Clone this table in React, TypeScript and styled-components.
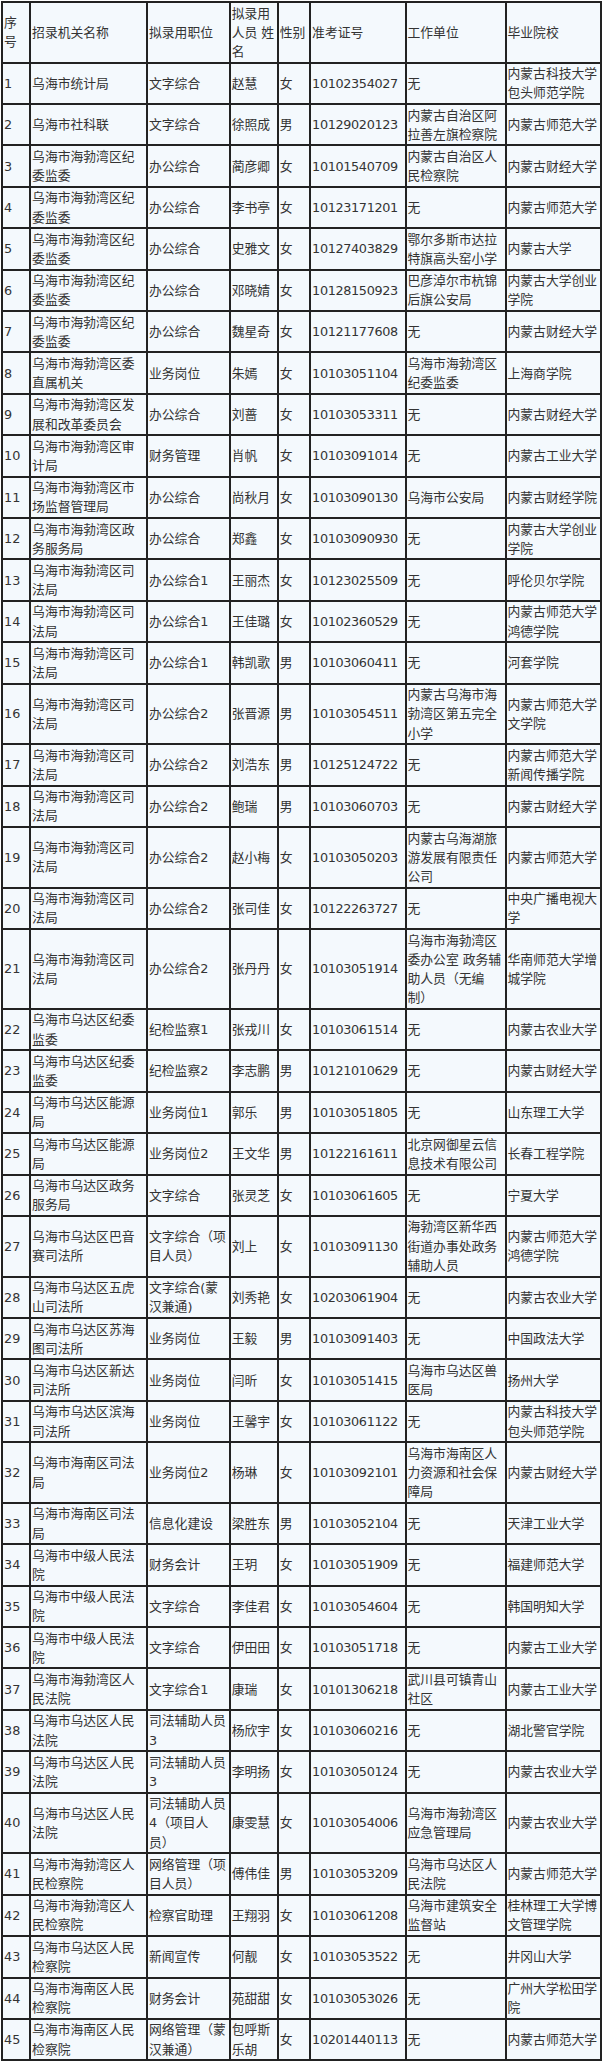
import React from "react";
import styled, { createGlobalStyle } from "styled-components";

const GlobalStyle = createGlobalStyle`
  html, body {
    margin: 0;
    padding: 0;
    background: #ffffff;
  }
  body {
    font-family: "DejaVu Sans", "Noto Sans CJK SC", sans-serif;
  }
`;

const Page = styled.div`
  padding: 1px 0 0 1px;
`;

const Table = styled.table`
  table-layout: fixed;
  width: 601px;
  border-collapse: collapse;
  background: #f4f9fd;
  font-family: "DejaVu Sans", "Noto Sans CJK SC", sans-serif;
  font-size: 12.8px;
  line-height: 19.2px;
  color: #333333;
  text-spacing-trim: space-all;
`;

const Col = styled.col<{ $w: number }>`
  width: ${(p) => p.$w}px;
`;

const HeadCell = styled.th`
  border: 2px solid #222222;
  padding: 0.5px 0 0.5px 1px;
  font-weight: normal;
  text-align: left;
  vertical-align: middle;
`;

const Cell = styled.td<{ $num?: boolean }>`
  border: 2px solid #222222;
  padding: 0.5px 0 0.5px 1px;
  text-align: left;
  vertical-align: middle;
  white-space: normal;
  letter-spacing: ${(p) => (p.$num ? "-0.35px" : "normal")};
`;

const widths = [28.1, 116.9, 82.7, 48.1, 32.3, 95.4, 100, 95.4];

const headers = [
  "序号",
  "招录机关名称",
  "拟录用职位",
  "拟录用人员 姓名",
  "性别",
  "准考证号",
  "工作单位",
  "毕业院校",
];

type Row = [string, string, string, string, string, string, string];

const rows: Row[] = [
  ["乌海市统计局", "文字综合", "赵慧", "女", "10102354027", "无", "内蒙古科技大学包头师范学院"],
  ["乌海市社科联", "文字综合", "徐照成", "男", "10129020123", "内蒙古自治区阿拉善左旗检察院", "内蒙古师范大学"],
  ["乌海市海勃湾区纪委监委", "办公综合", "蔺彦卿", "女", "10101540709", "内蒙古自治区人民检察院", "内蒙古财经大学"],
  ["乌海市海勃湾区纪委监委", "办公综合", "李书亭", "女", "10123171201", "无", "内蒙古师范大学"],
  ["乌海市海勃湾区纪委监委", "办公综合", "史雅文", "女", "10127403829", "鄂尔多斯市达拉特旗高头窑小学", "内蒙古大学"],
  ["乌海市海勃湾区纪委监委", "办公综合", "邓晓婧", "女", "10128150923", "巴彦淖尔市杭锦后旗公安局", "内蒙古大学创业学院"],
  ["乌海市海勃湾区纪委监委", "办公综合", "魏星奇", "女", "10121177608", "无", "内蒙古财经大学"],
  ["乌海市海勃湾区委直属机关", "业务岗位", "朱嫣", "女", "10103051104", "乌海市海勃湾区纪委监委", "上海商学院"],
  ["乌海市海勃湾区发展和改革委员会", "办公综合", "刘蔷", "女", "10103053311", "无", "内蒙古财经大学"],
  ["乌海市海勃湾区审计局", "财务管理", "肖帆", "女", "10103091014", "无", "内蒙古工业大学"],
  ["乌海市海勃湾区市场监督管理局", "办公综合", "尚秋月", "女", "10103090130", "乌海市公安局", "内蒙古财经学院"],
  ["乌海市海勃湾区政务服务局", "办公综合", "郑鑫", "女", "10103090930", "无", "内蒙古大学创业学院"],
  ["乌海市海勃湾区司法局", "办公综合1", "王丽杰", "女", "10123025509", "无", "呼伦贝尔学院"],
  ["乌海市海勃湾区司法局", "办公综合1", "王佳璐", "女", "10102360529", "无", "内蒙古师范大学鸿德学院"],
  ["乌海市海勃湾区司法局", "办公综合1", "韩凯歌", "男", "10103060411", "无", "河套学院"],
  ["乌海市海勃湾区司法局", "办公综合2", "张晋源", "男", "10103054511", "内蒙古乌海市海勃湾区第五完全小学", "内蒙古师范大学文学院"],
  ["乌海市海勃湾区司法局", "办公综合2", "刘浩东", "男", "10125124722", "无", "内蒙古师范大学新闻传播学院"],
  ["乌海市海勃湾区司法局", "办公综合2", "鲍瑞", "男", "10103060703", "无", "内蒙古财经大学"],
  ["乌海市海勃湾区司法局", "办公综合2", "赵小梅", "女", "10103050203", "内蒙古乌海湖旅游发展有限责任公司", "内蒙古师范大学"],
  ["乌海市海勃湾区司法局", "办公综合2", "张司佳", "女", "10122263727", "无", "中央广播电视大学"],
  ["乌海市海勃湾区司法局", "办公综合2", "张丹丹", "女", "10103051914", "乌海市海勃湾区委办公室 政务辅助人员（无编制）", "华南师范大学增城学院"],
  ["乌海市乌达区纪委监委", "纪检监察1", "张戎川", "女", "10103061514", "无", "内蒙古农业大学"],
  ["乌海市乌达区纪委监委", "纪检监察2", "李志鹏", "男", "10121010629", "无", "内蒙古财经大学"],
  ["乌海市乌达区能源局", "业务岗位1", "郭乐", "男", "10103051805", "无", "山东理工大学"],
  ["乌海市乌达区能源局", "业务岗位2", "王文华", "男", "10122161611", "北京网御星云信息技术有限公司", "长春工程学院"],
  ["乌海市乌达区政务服务局", "文字综合", "张灵芝", "女", "10103061605", "无", "宁夏大学"],
  ["乌海市乌达区巴音赛司法所", "文字综合（项目人员）", "刘上", "女", "10103091130", "海勃湾区新华西街道办事处政务辅助人员", "内蒙古师范大学鸿德学院"],
  ["乌海市乌达区五虎山司法所", "文字综合(蒙汉兼通)", "刘秀艳", "女", "10203061904", "无", "内蒙古农业大学"],
  ["乌海市乌达区苏海图司法所", "业务岗位", "王毅", "男", "10103091403", "无", "中国政法大学"],
  ["乌海市乌达区新达司法所", "业务岗位", "闫昕", "女", "10103051415", "乌海市乌达区兽医局", "扬州大学"],
  ["乌海市乌达区滨海司法所", "业务岗位", "王馨宇", "女", "10103061122", "无", "内蒙古科技大学包头师范学院"],
  ["乌海市海南区司法局", "业务岗位2", "杨琳", "女", "10103092101", "乌海市海南区人力资源和社会保障局", "内蒙古财经大学"],
  ["乌海市海南区司法局", "信息化建设", "梁胜东", "男", "10103052104", "无", "天津工业大学"],
  ["乌海市中级人民法院", "财务会计", "王玥", "女", "10103051909", "无", "福建师范大学"],
  ["乌海市中级人民法院", "文字综合", "李佳君", "女", "10103054604", "无", "韩国明知大学"],
  ["乌海市中级人民法院", "文字综合", "伊田田", "女", "10103051718", "无", "内蒙古工业大学"],
  ["乌海市海勃湾区人民法院", "文字综合1", "康瑞", "女", "10101306218", "武川县可镇青山社区", "内蒙古工业大学"],
  ["乌海市乌达区人民法院", "司法辅助人员3", "杨欣宇", "女", "10103060216", "无", "湖北警官学院"],
  ["乌海市乌达区人民法院", "司法辅助人员3", "李明扬", "女", "10103050124", "无", "内蒙古农业大学"],
  ["乌海市乌达区人民法院", "司法辅助人员4（项目人员）", "康雯慧", "女", "10103054006", "乌海市海勃湾区应急管理局", "内蒙古农业大学"],
  ["乌海市海勃湾区人民检察院", "网络管理（项目人员）", "傅伟佳", "男", "10103053209", "乌海市乌达区人民法院", "内蒙古师范大学"],
  ["乌海市海勃湾区人民检察院", "检察官助理", "王翔羽", "女", "10103061208", "乌海市建筑安全监督站", "桂林理工大学博文管理学院"],
  ["乌海市乌达区人民检察院", "新闻宣传", "何靓", "女", "10103053522", "无", "井冈山大学"],
  ["乌海市海南区人民检察院", "财务会计", "苑甜甜", "女", "10103053026", "无", "广州大学松田学院"],
  ["乌海市海南区人民检察院", "网络管理（蒙汉兼通）", "包呼斯乐胡", "女", "10201440113", "无", "内蒙古师范大学"],
];

export default function App() {
  return (
    <>
      <GlobalStyle />
      <Page>
        <Table>
          <colgroup>
            {widths.map((w, i) => (
              <Col key={i} $w={w} />
            ))}
          </colgroup>
          <thead>
            <tr>
              {headers.map((h) => (
                <HeadCell key={h}>{h}</HeadCell>
              ))}
            </tr>
          </thead>
          <tbody>
            {rows.map((r, i) => (
              <tr key={i}>
                <Cell>{i + 1}</Cell>
                {r.map((c, j) => (
                  <Cell key={j} $num={j === 4}>
                    {c}
                  </Cell>
                ))}
              </tr>
            ))}
          </tbody>
        </Table>
      </Page>
    </>
  );
}
